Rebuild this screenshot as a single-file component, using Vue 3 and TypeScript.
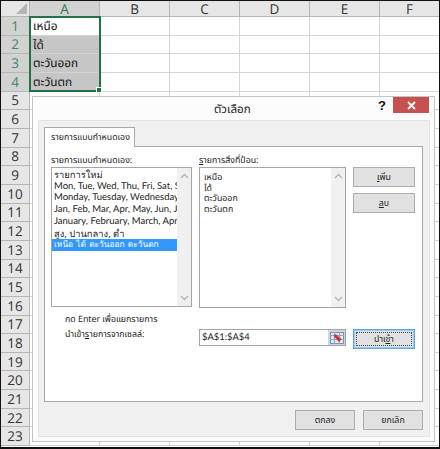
<script setup lang="ts">
const columns: string[] = ['A', 'B', 'C', 'D', 'E', 'F']
const rows: number[] = Array.from({ length: 23 }, (_, i) => i + 1)
const cellText: Record<number, string> = { 1: 'เหนือ', 2: 'ได้', 3: 'ตะวันออก', 4: 'ตะวันตก' }
const customLists: { text: string; thai: boolean }[] = [
  { text: 'รายการใหม่', thai: true },
  { text: 'Mon, Tue, Wed, Thu, Fri, Sat, Sun', thai: false },
  { text: 'Monday, Tuesday, Wednesday, Thursday', thai: false },
  { text: 'Jan, Feb, Mar, Apr, May, Jun, Jul, Aug', thai: false },
  { text: 'January, February, March, April, May', thai: false },
  { text: 'สูง, ปานกลาง, ต่ำ', thai: true },
  { text: 'เหนือ ได้ ตะวันออก ตะวันตก', thai: true },
]
const entries: string[] = ['เหนือ', 'ได้', 'ตะวันออก', 'ตะวันตก']
</script>

<template>
  <div class="frame">
    <div class="sheet">
      <div class="corner"><span class="tri"></span></div>
      <div v-for="c in columns" :key="c" class="col-head" :class="{ active: c === 'A' }">{{ c }}</div>
      <template v-for="r in rows" :key="r">
        <div class="row-head" :class="{ active: r <= 4 }">{{ r }}</div>
        <div
          v-for="c in columns"
          :key="c"
          class="cell"
          :class="{ sel: c === 'A' && r >= 2 && r <= 4 }"
        >{{ c === 'A' ? cellText[r] : '' }}</div>
      </template>
    </div>
    <div class="selection"><span class="handle"></span></div>

    <section class="dialog">
      <header class="title-bar">
        <span class="title">ตัวเลือก</span>
        <span class="help">?</span>
        <button class="close" type="button">
          <svg width="9" height="9" viewBox="0 0 9 9"><path d="M1 1l7 7M8 1l-7 7" stroke="#fff" stroke-width="1.8" fill="none" /></svg>
        </button>
      </header>
      <div class="body">
        <div class="tabs"><div class="tab">รายการแบบกำหนดเอง</div></div>
        <div class="panel">
          <div class="columns">
            <div class="label">รายการแบบกำหนดเอง:</div>
            <div class="label"><u>ร</u>ายการสิ่งที่ป้อน:</div>
            <div></div>

            <div class="list list-left">
              <div class="items">
                <div
                  v-for="(item, i) in customLists"
                  :key="item.text"
                  class="item"
                  :class="{ picked: i === 6, thai: item.thai }"
                >{{ item.text }}</div>
              </div>
              <div class="scroll">
                <svg width="9" height="6" viewBox="0 0 9 6"><path d="M1 5l3.5-3.5L8 5" stroke="#b4b4b4" stroke-width="1.4" fill="none" /></svg>
                <svg width="9" height="6" viewBox="0 0 9 6"><path d="M1 1l3.5 3.5L8 1" stroke="#b4b4b4" stroke-width="1.4" fill="none" /></svg>
              </div>
            </div>
            <div class="list list-right">
              <div class="items entries">
                <div v-for="e in entries" :key="e" class="entry">{{ e }}</div>
              </div>
              <div class="scroll">
                <svg width="9" height="6" viewBox="0 0 9 6"><path d="M1 5l3.5-3.5L8 5" stroke="#b4b4b4" stroke-width="1.4" fill="none" /></svg>
                <svg width="9" height="6" viewBox="0 0 9 6"><path d="M1 1l3.5 3.5L8 1" stroke="#b4b4b4" stroke-width="1.4" fill="none" /></svg>
              </div>
            </div>
            <div class="side-buttons">
              <button class="btn" type="button"><u>เ</u>พิ่ม</button>
              <button class="btn" type="button"><u>ล</u>บ</button>
            </div>
          </div>

          <div class="columns import">
            <div class="hints">
              <div class="hint">กด Enter เพื่อแยกรายการ</div>
              <div class="hint">นำเข้า<u>ร</u>ายการจากเซลล์:</div>
            </div>
            <div class="range">
              <span class="range-text">$A$1:$A$4</span>
              <span class="range-btn">
                <svg width="14" height="12" viewBox="0 0 14 12">
                  <rect x="0.5" y="0.5" width="13" height="11" fill="#dce8f4" stroke="#6f93ba" />
                  <path d="M0 3.5h14M0 7.5h14M4.5 0v12M9.5 0v12" stroke="#8aa8c8" stroke-width="1" />
                  <path d="M3.5 4l2-2 6 5-2.5 3z" fill="#d6322c" />
                </svg>
              </span>
            </div>
            <div class="import-cell">
              <button class="btn focus" type="button"><span class="focus-in">นำเ<u>ข้</u>า</span></button>
            </div>
          </div>
        </div>
        <footer class="footer">
          <button class="btn foot" type="button">ตกลง</button>
          <button class="btn foot" type="button">ยกเลิก</button>
        </footer>
      </div>
    </section>
  </div>
</template>

<style>
html, body { margin: 0; background: #fff; }
</style>

<style scoped>
.frame {
  position: relative;
  width: 440px;
  height: 449px;
  box-sizing: border-box;
  border: solid #111;
  border-width: 1px 1px 2px 1px;
  overflow: hidden;
  font-family: "Noto Sans", "Noto Sans Thai", "DejaVu Sans", sans-serif;
  text-rendering: geometricPrecision;
  color: #222;
}
.sheet {
  display: grid;
  grid-template-columns: 29px 70px 70px 70px 70px 70px 60px;
  grid-template-rows: 16px repeat(23, 18.67px);
}
.corner, .col-head, .row-head {
  background: #e6e6e6;
  box-sizing: border-box;
  border-right: 1px solid #b5b5b5;
  border-bottom: 1px solid #b5b5b5;
  display: flex;
  align-items: center;
  justify-content: center;
  font-family: "Open Sans", "Liberation Sans", sans-serif;
  font-size: 13.5px;
  color: #333;
}
.corner { position: relative; }
.tri {
  position: absolute;
  right: 2px;
  bottom: 2px;
  border-style: solid;
  border-width: 0 0 11px 11px;
  border-color: transparent transparent #b4b4b4 transparent;
}
.col-head.active, .row-head.active {
  background: #d2d2d2;
  color: #2a7d50;
}
.row-head.active { color: #3b8a60; }
.cell {
  box-sizing: border-box;
  border-right: 1px solid #d4d4d4;
  border-bottom: 1px solid #d4d4d4;
  font-size: 11.8px;
  line-height: 18px;
  padding-left: 3px;
  white-space: nowrap;
  color: #111;
}
.cell.sel { background: #c6c6c6; }
.selection {
  position: absolute;
  left: 28px;
  top: 15px;
  width: 72px;
  height: 76px;
  box-sizing: border-box;
  border: 2px solid #217346;
}
.handle {
  position: absolute;
  right: -3px;
  bottom: -3px;
  width: 4px;
  height: 4px;
  background: #217346;
  border: 1px solid #fff;
}
.dialog {
  position: absolute;
  left: 31px;
  top: 95px;
  width: 403px;
  height: 346px;
  box-sizing: border-box;
  background: #fcfcfc;
  border: 1px solid #c4c4c4;
  display: flex;
  flex-direction: column;
  font-size: 8.8px;
}
.title-bar {
  position: relative;
  height: 23px;
  flex: none;
}
.title {
  position: absolute;
  left: 181px;
  top: 4px;
  font-size: 11.6px;
  line-height: 18px;
  color: #222;
}
.help {
  position: absolute;
  left: 345px;
  top: 0;
  font-family: "Liberation Sans", sans-serif;
  font-weight: 700;
  font-size: 13px;
  line-height: 18px;
  color: #111;
}
.close {
  position: absolute;
  left: 360px;
  top: 0;
  width: 36px;
  height: 16px;
  padding: 0;
  border: 0;
  background: #c75050;
  display: flex;
  align-items: center;
  justify-content: center;
}
.body {
  flex: 1;
  margin: 0 4px 4px 5px;
  box-sizing: border-box;
  background: #f0f0f0;
  border: 1px solid #e2e2e2;
  padding: 6px 6px 0 5px;
  display: flex;
  flex-direction: column;
}
.tabs { display: flex; height: 20px; flex: none; margin-bottom: -1px; position: relative; z-index: 1; }
.tab {
  box-sizing: border-box;
  width: 91px;
  height: 20px;
  background: #fff;
  border: 1px solid #a8a8a8;
  border-bottom: 0;
  padding-left: 6px;
  line-height: 18px;
  white-space: nowrap;
  overflow: hidden;
}
.panel {
  box-sizing: border-box;
  height: 256px;
  background: #fff;
  border: 1px solid #a8a8a8;
  padding: 7px 6px 0 6px;
  flex: none;
}
.columns {
  display: grid;
  grid-template-columns: 141px 147px 62px;
  column-gap: 7px;
}
.label { height: 13px; line-height: 13px; white-space: nowrap; }
.list {
  box-sizing: border-box;
  background: #fff;
  border: 1px solid #a5a5a5;
  display: flex;
}
.list-left { height: 140px; }
.list-right { height: 141px; }
.items { flex: 1; min-width: 0; overflow: hidden; padding-top: 1px; }
.item {
  line-height: 11.7px;
  padding-left: 2px;
  white-space: nowrap;
  overflow: hidden;
  font-family: Lato, "Noto Sans", sans-serif;
  font-size: 9.5px;
}
.item.thai { font-family: "Noto Sans", sans-serif; font-size: 9.4px; }
.item.picked { background: #3399ff; color: #fff; font-size: 8.4px; word-spacing: 1px; }
.entries { padding: 4px 0 0 4px; }
.entry { line-height: 10.5px; font-size: 8.8px; }
.scroll {
  flex: none;
  width: 14px;
  background: #f0f0f0;
  display: flex;
  flex-direction: column;
  align-items: center;
  justify-content: space-between;
  padding: 5px 0;
}
.side-buttons { display: flex; flex-direction: column; gap: 6px; }
.btn {
  box-sizing: border-box;
  height: 20px;
  width: 62px;
  padding: 0;
  background: #e1e1e1;
  border: 1px solid #adadad;
  font: inherit;
  color: #222;
}
.import { margin-top: 4px; }
.hints { padding-left: 14px; }
.hint { height: 15px; line-height: 15px; white-space: nowrap; }
.range {
  box-sizing: border-box;
  height: 17px;
  margin-top: 17px;
  background: #fff;
  border: 1px solid #a5a5a5;
  display: flex;
  align-items: center;
  padding-left: 2px;
}
.range-text { flex: 1; font-family: Lato, "Noto Sans", sans-serif; font-size: 9.4px; }
.range-btn {
  width: 17px;
  height: 15px;
  background: #d4d4d4;
  display: flex;
  align-items: center;
  justify-content: center;
}
.import-cell { margin-top: 17px; }
.btn.focus {
  border: 1px solid #5aa6e8;
  box-shadow: inset 0 0 0 1px #9cc8ee;
  padding: 2px;
}
.focus-in {
  display: block;
  height: 100%;
  box-sizing: border-box;
  border: 1px dotted #444;
  line-height: 12px;
}
.footer {
  display: flex;
  justify-content: flex-end;
  gap: 8px;
  margin-top: 8px;
}
.btn.foot { width: 60px; }
</style>
